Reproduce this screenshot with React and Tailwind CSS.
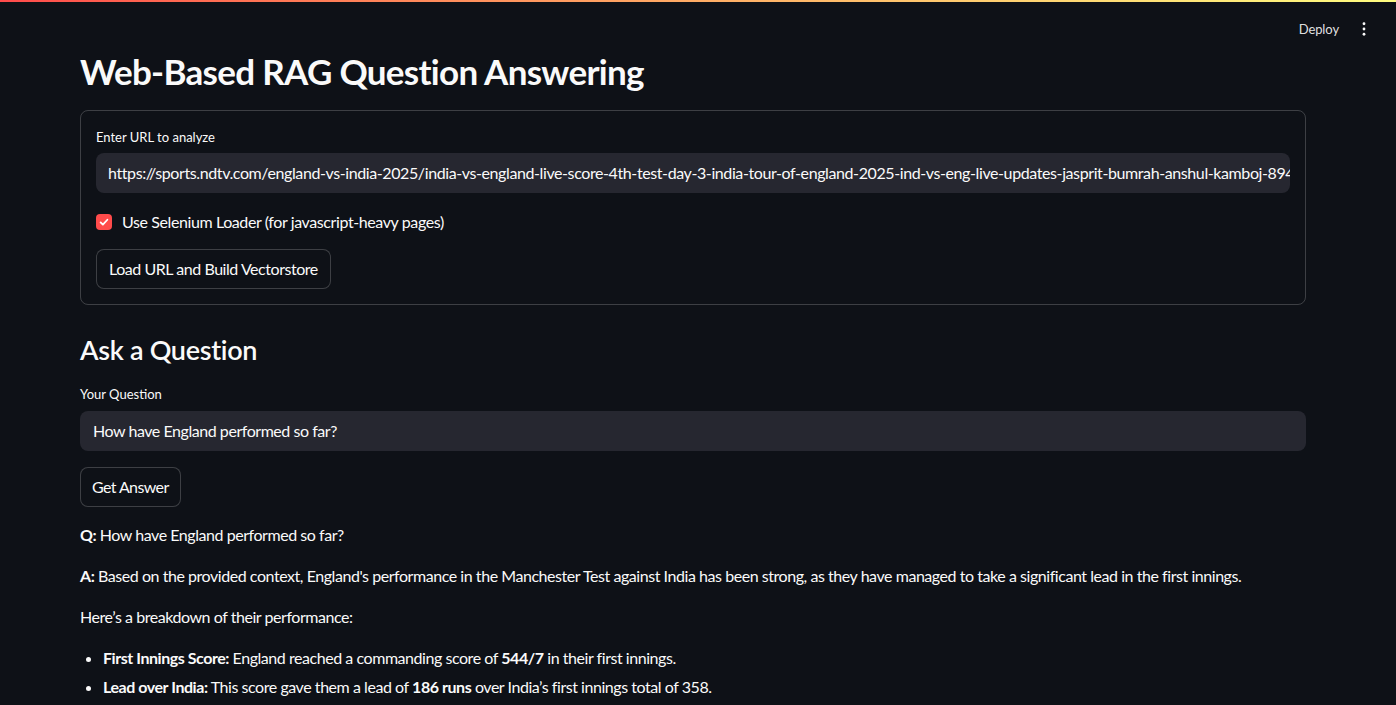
import React from "react";

function Checkbox() {
  return (
    <span className="flex h-4 w-4 items-center justify-center rounded-[4px] bg-[#ff4b4b]">
      <svg viewBox="0 0 16 16" className="h-3 w-3" fill="none" stroke="white" strokeWidth="2.4" strokeLinecap="round" strokeLinejoin="round">
        <path d="M3.5 8.5l3 3 6-6.5" />
      </svg>
    </span>
  );
}

export default function App() {
  return (
    <div className="min-h-[705px] bg-[#0e1117] text-[#fafafa] font-['Lato','Liberation_Sans',sans-serif]">
      {/* Top decoration */}
      <div className="h-[2px] bg-linear-to-r from-[#ff4b4b] to-[#fffd80]"></div>

      {/* Header */}
      <div className="flex h-[56px] items-center justify-end pr-[30px] -mb-[4px]">
        <span className="mr-[23px] -mt-[1px] text-[13px] tracking-[-0.1px] text-[#fafafa]/90">Deploy</span>
        <svg viewBox="0 0 4 16" className="-mt-[2px] h-[14px] w-[4px]" fill="#fafafa">
          <circle cx="2" cy="2" r="1.6" />
          <circle cx="2" cy="8" r="1.6" />
          <circle cx="2" cy="14" r="1.6" />
        </svg>
      </div>

      <div className="ml-[80px] mr-[90px] -mt-[52px]">
        {/* Title */}
        <h1 className="pt-[41px] text-[35px] font-bold leading-[48px] tracking-[-0.7px]">
          Web-Based RAG Question Answering
        </h1>

        {/* URL form */}
        <div className="mt-[15px] rounded-[8px] border border-[#fafafa]/20 p-[15px]">
          <label className="block text-[13px] leading-[22px]">Enter URL to analyze</label>
          <div className="mt-[5px] flex h-[40px] items-center overflow-hidden rounded-[8px] bg-[#262730] px-[12px]">
            <span className="whitespace-nowrap text-[16px] tracking-[-0.4px]">
              https://sports.ndtv.com/england-vs-india-2025/india-vs-england-live-score-4th-test-day-3-india-tour-of-england-2025-ind-vs-eng-live-updates-jasprit-bumrah-anshul-kamboj-8945123
            </span>
          </div>
          <div className="mt-[20px] flex items-center gap-[10px]">
            <Checkbox />
            <span className="text-[16px] leading-[17px] tracking-[-0.4px]">Use Selenium Loader (for javascript-heavy pages)</span>
          </div>
          <button className="mt-[19px] h-[40px] rounded-[8px] border border-[#fafafa]/20 bg-[#0e1117] px-[12px] text-[16px] tracking-[-0.45px]">
            Load URL and Build Vectorstore
          </button>
        </div>

        {/* Ask */}
        <h2 className="mt-[27px] text-[27px] font-semibold leading-[36px] tracking-[-0.3px]">Ask a Question</h2>
        <label className="mt-[16px] block text-[13px] leading-[20px]">Your Question</label>
        <div className="mt-[7px] flex h-[40px] items-center rounded-[8px] bg-[#262730] px-[13px] text-[16px] tracking-[-0.45px]">
          How have England performed so far?
        </div>
        <button className="mt-[16px] h-[40px] rounded-[8px] border border-[#fafafa]/20 bg-[#0e1117] px-[11px] text-[16px] tracking-[-0.6px]">
          Get Answer
        </button>

        {/* Answer */}
        <div className="mt-[16px] text-[16px] leading-[24px] tracking-[-0.45px]">
          <p><b>Q:</b> How have England performed so far?</p>
          <p className="mt-[17px]">
            <b>A:</b> Based on the provided context, England's performance in the Manchester Test against India has been strong, as they have managed to take a significant lead in the first innings.
          </p>
          <p className="mt-[17px]">Here’s a breakdown of their performance:</p>
          <ul className="mt-[17px] list-disc pl-[23px]">
            <li><b>First Innings Score:</b> England reached a commanding score of <b>544/7</b> in their first innings.</li>
            <li className="mt-[5px]"><b>Lead over India:</b> This score gave them a lead of <b>186 runs</b> over India’s first innings total of 358.</li>
          </ul>
        </div>
      </div>
    </div>
  );
}
